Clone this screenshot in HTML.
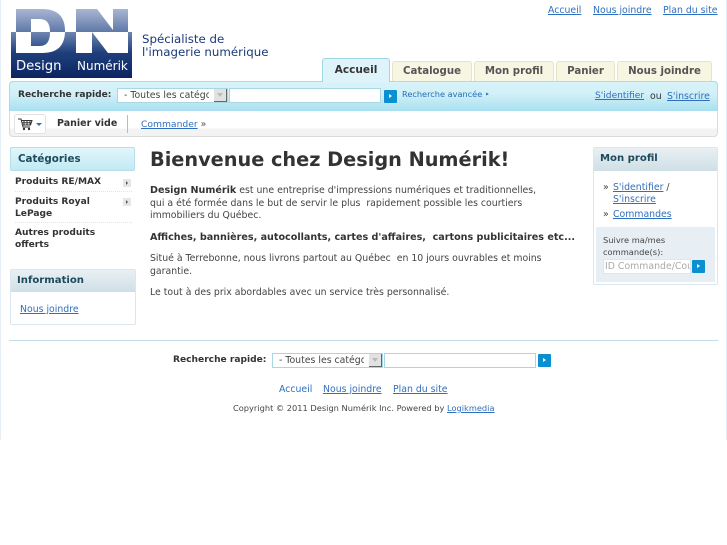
<!DOCTYPE html>
<html lang="fr"><head><meta charset="utf-8"><title>Design Numérik</title>
<style>
html,body{margin:0;padding:0;background:#fff}
body{width:727px;height:545px;position:relative;overflow:hidden;font-family:"DejaVu Sans",sans-serif;font-size:9.35px;color:#333}
a{color:#2f6fbf;text-decoration:underline}
.a{position:absolute;white-space:nowrap;line-height:13px}
.b{font-weight:bold;font-size:9.1px}
.tab{position:absolute;top:61px;height:20px;background:#f7f6e3;border:1px solid #e6e4c8;border-bottom:0;border-radius:3px 3px 0 0;box-sizing:border-box;text-align:center;font:bold 10.2px/20px "DejaVu Sans",sans-serif;color:#555}
.sel{position:absolute;box-sizing:border-box;background:#fff;border:1px solid #a9d6e3;height:15px;font-size:9.35px;line-height:14px;color:#444;white-space:nowrap}
.sel span{position:absolute;left:6px;top:0;width:85px;overflow:hidden}
.sel i{position:absolute;right:0;top:0;width:13px;height:13px;background:#e2e2e2;border-right:1px solid #666;border-bottom:1px solid #666;box-sizing:border-box}
.sel i:after{content:"";position:absolute;left:3px;top:4px;border:3px solid transparent;border-top:4px solid #bbb}
.inp{position:absolute;box-sizing:border-box;background:#fff;border:1px solid #a9d6e3;height:15px}
.go{position:absolute;width:13px;height:13px;background:#0a8fd0;border-radius:1px}
.go:after{content:"";position:absolute;left:5px;top:4px;border:2.5px solid transparent;border-left:3px solid #fff;border-right:0}
.arr{position:absolute;left:123px;width:8px;height:8px;background:#e6e6e6}
.arr:after{content:"";position:absolute;left:3px;top:2px;border:2px solid transparent;border-left:2px solid #555;border-right:0}
</style></head><body>

<div style="position:absolute;left:0;top:0;width:1px;height:440px;background:#e6eef5"></div>
<div style="position:absolute;left:726px;top:0;width:1px;height:440px;background:#e6eef5"></div>

<svg style="position:absolute;left:0;top:0" width="140" height="80" viewBox="0 0 140 80">
<defs>
<linearGradient id="u" gradientUnits="userSpaceOnUse" x1="0" y1="9" x2="0" y2="32"><stop offset="0" stop-color="#a9b6d2"/><stop offset="1" stop-color="#5f78a8"/></linearGradient>
<linearGradient id="l" gradientUnits="userSpaceOnUse" x1="0" y1="32" x2="0" y2="78"><stop offset="0" stop-color="#6f86b0"/><stop offset=".45" stop-color="#1f3f7c"/><stop offset="1" stop-color="#0b2560"/></linearGradient>
<clipPath id="t"><rect x="0" y="0" width="140" height="32"/></clipPath>
<clipPath id="d"><rect x="0" y="32" width="140" height="30"/></clipPath>
</defs>
<rect x="11" y="32" width="121" height="46" fill="url(#l)"/>
<g clip-path="url(#t)"><path fill-rule="evenodd" fill="url(#u)" d="M16 9H42Q65 9 65 31Q65 53 42 53H16ZM31 19V46H40Q50 46 50 32Q50 19 40 19ZM76 9H97L113 30V9H128V53H108L92 32V53H76Z"/></g>
<g clip-path="url(#d)"><path fill-rule="evenodd" fill="#fff" d="M16 9H42Q65 9 65 31Q65 53 42 53H16ZM31 19V46H40Q50 46 50 32Q50 19 40 19ZM76 9H97L113 30V9H128V53H108L92 32V53H76Z"/></g>
<text x="16" y="70" font-family="'DejaVu Sans',sans-serif" font-size="13.2" fill="#fff">Design</text>
<text x="77" y="70" font-family="'DejaVu Sans',sans-serif" font-size="12" fill="#fff">Numérik</text>
</svg>

<div class="a" style="left:142px;top:33px;font-size:11.8px;color:#1a3a78;line-height:13px">Spécialiste de<br>l'imagerie numérique</div>

<div class="a" style="left:548px;top:4px"><a href="#">Accueil</a></div>
<div class="a" style="left:593px;top:4px"><a href="#">Nous joindre</a></div>
<div class="a" style="left:663px;top:4px"><a href="#">Plan du site</a></div>

<div class="tab" style="left:322px;top:58px;width:68px;height:24px;background:#dff4fa;border-color:#9fd6e4;color:#333;line-height:23px;z-index:3;font-size:10.6px">Accueil</div>
<div class="tab" style="left:392px;width:80px">Catalogue</div>
<div class="tab" style="left:474px;width:80px">Mon profil</div>
<div class="tab" style="left:556px;width:59px">Panier</div>
<div class="tab" style="left:617px;width:95px">Nous joindre</div>

<div style="position:absolute;left:9px;top:81px;width:709px;height:56px;box-sizing:border-box;border:1px solid #d8dcdc;border-radius:4px;background:linear-gradient(#fff 0,#fff 46px,#f3f3f3 47px);"></div>
<div style="position:absolute;left:9px;top:81px;width:709px;height:30px;box-sizing:border-box;border:1px solid #a9dbe8;border-bottom:0;border-radius:4px 4px 0 0;background:linear-gradient(#d8f3f9,#d2f0f8 40%,#a8e0ef);z-index:2"></div>

<div class="a b" style="left:18px;top:89px;z-index:3;color:#333">Recherche rapide:</div>
<div class="sel" style="left:117px;top:88px;width:111px;z-index:3"><span>- Toutes les catégories</span><i></i></div>
<div class="inp" style="left:229px;top:88px;width:152px;z-index:3"></div>
<div class="go" style="left:384px;top:90px;z-index:3"></div>
<div class="a" style="left:402px;top:88px;font-size:8.2px;color:#1f6fb5;z-index:3">Recherche avancée ‣</div>
<div class="a" style="left:595px;top:90px;z-index:3;font-size:9.1px"><a href="#">S'identifier</a></div>
<div class="a" style="left:650px;top:90px;z-index:3;color:#333">ou</div>
<div class="a" style="left:667px;top:90px;z-index:3"><a href="#">S'inscrire</a></div>

<div style="position:absolute;left:14px;top:114px;width:32px;height:20px;box-sizing:border-box;border:1px solid #e2e2e2;border-radius:3px;background:#fff">
<svg width="30" height="18" style="position:absolute;left:0;top:0"><path d="M3 4H6L8 12H15M6.500 5.500H17L15.500 10H7.500M9 5.500V10M12 5.500V10M15 5.500V10M7 7.800H16" fill="none" stroke="#333" stroke-width="1"/><circle cx="9" cy="14" r="1.200" fill="#333"/><circle cx="14" cy="14" r="1.200" fill="#333"/><path d="M21 8H27L24 11Z" fill="#2f6fbf"/></svg>
</div>
<div class="a b" style="left:57px;top:117px;color:#333;font-size:9.5px">Panier vide</div>
<div style="position:absolute;left:127px;top:115px;width:1px;height:18px;background:#bbb"></div>
<div class="a" style="left:141px;top:118px"><a href="#" style="font-size:9.2px">Commander</a><span style="color:#555;margin-left:3px">»</span></div>

<!-- Catégories -->
<div style="position:absolute;left:10px;top:147px;width:125px;height:24px;box-sizing:border-box;border:1px solid #b5e0ea;border-radius:2px;background:linear-gradient(#e2f6fa,#c2eaf4);font:bold 10.3px/22px 'DejaVu Sans',sans-serif;color:#1c4a5c;padding-left:7px">Catégories</div>
<div class="a b" style="left:15px;top:176px">Produits RE/MAX</div><div class="arr" style="top:179px"></div>
<div style="position:absolute;left:15px;top:191px;width:117px;border-top:1px dotted #e4e4e4"></div>
<div class="a b" style="left:15px;top:196px;line-height:12px">Produits Royal<br>LePage</div><div class="arr" style="top:198px"></div>
<div style="position:absolute;left:15px;top:222px;width:117px;border-top:1px dotted #e4e4e4"></div>
<div class="a b" style="left:15px;top:227px;line-height:12px">Autres produits<br>offerts</div>

<!-- Information -->
<div style="position:absolute;left:10px;top:269px;width:126px;height:56px;box-sizing:border-box;border:1px solid #dbe6ee;border-radius:2px">
<div style="height:22px;background:linear-gradient(#e9f0f4,#cfdfe6);font:bold 10.1px/21px 'DejaVu Sans',sans-serif;color:#1c4a5c;padding-left:6px">Information</div></div>
<div class="a" style="left:20px;top:303px"><a href="#">Nous joindre</a></div>

<!-- Main -->
<div class="a" style="left:150px;top:148px;font-weight:bold;font-size:19.3px;line-height:24px;color:#333">Bienvenue chez Design Numérik!</div>
<div class="a" style="left:150px;top:185px;line-height:12.5px;color:#444"><b style="color:#333;font-size:9.6px">Design Numérik</b> est une entreprise d'impressions numériques et traditionnelles,<br>qui a été formée dans le but de servir le plus&nbsp; rapidement possible les courtiers<br>immobiliers du Québec.</div>
<div class="a" style="left:150px;top:231px;color:#333;font-weight:bold;font-size:9.6px">Affiches, bannières, autocollants, cartes d'affaires,&nbsp; cartons publicitaires etc...</div>
<div class="a" style="left:150px;top:252px;line-height:13px;color:#444">Situé à Terrebonne, nous livrons partout au Québec&nbsp; en 10 jours ouvrables et moins<br>garantie.</div>
<div class="a" style="left:150px;top:286px;color:#444">Le tout à des prix abordables avec un service très personnalisé.</div>

<!-- Mon profil -->
<div style="position:absolute;left:593px;top:147px;width:125px;height:138px;box-sizing:border-box;border:1px solid #dbe6ee;border-radius:2px">
<div style="height:23px;background:linear-gradient(#e9f0f4,#cfdfe6);font:bold 10.1px/21px 'DejaVu Sans',sans-serif;color:#1c4a5c;padding-left:6px">Mon profil</div></div>
<div class="a" style="left:603px;top:182px;color:#444;line-height:12px">»</div>
<div class="a" style="left:613px;top:182px;line-height:12px"><a href="#">S'identifier</a> <span style="color:#444">/</span><br><a href="#">S'inscrire</a></div>
<div class="a" style="left:603px;top:208px;color:#444;line-height:13px">»</div>
<div class="a" style="left:613px;top:208px;line-height:13px"><a href="#">Commandes</a></div>
<div style="position:absolute;left:596px;top:227px;width:119px;height:55px;background:#e8eff4"></div>
<div class="a" style="left:603px;top:234px;font-size:8.3px;line-height:12px;color:#444">Suivre ma/mes<br>commande(s):</div>
<div style="position:absolute;left:603px;top:259px;width:88px;height:15px;box-sizing:border-box;background:#fff;border:1px solid #dfe5ea;font-size:9.35px;line-height:13px;color:#aaa;padding-left:1px;overflow:hidden;white-space:nowrap">ID Commande/Cou</div>
<div class="go" style="left:692px;top:260px"></div>

<!-- Footer -->
<div style="position:absolute;left:9px;top:340px;width:709px;height:1px;background:#c3dde8"></div>
<div class="a b" style="left:173px;top:354px;color:#333">Recherche rapide:</div>
<div class="sel" style="left:272px;top:353px;width:111px"><span>- Toutes les catégories</span><i></i></div>
<div class="inp" style="left:384px;top:353px;width:152px"></div>
<div class="go" style="left:538px;top:354px"></div>
<div class="a" style="left:279px;top:383px"><a href="#" style="text-decoration:none">Accueil</a></div>
<div class="a" style="left:323px;top:383px"><a href="#">Nous joindre</a></div>
<div class="a" style="left:393px;top:383px"><a href="#">Plan du site</a></div>
<div class="a" style="left:233px;top:402px;font-size:8.25px;color:#444">Copyright © 2011 Design Numérik Inc. Powered by <a href="#">Logikmedia</a></div>
</body></html>
